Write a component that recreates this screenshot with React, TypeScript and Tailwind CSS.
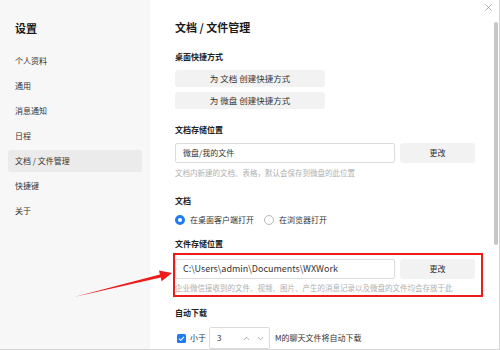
import React from "react";

const menu = ["个人资料", "通用", "消息通知", "日程", "文档 / 文件管理", "快捷键", "关于"];

function Radio({ checked }: { checked: boolean }) {
  return checked ? (
    <span className="block w-[10px] h-[10px] rounded-full border-[3px] border-[#1f7cf2] bg-white shrink-0" />
  ) : (
    <span className="block w-[10px] h-[10px] rounded-full border border-[#b8b8b8] bg-white shrink-0" />
  );
}

export default function App() {
  return (
    <div className="relative w-[500px] h-[350px] flex overflow-hidden border-b border-r border-[#d4d4d4] bg-white font-['Noto_Sans_CJK_SC',sans-serif] text-[#333]">
      {/* Sidebar */}
      <div className="w-[150px] h-full bg-[#f7f7f7] flex flex-col shrink-0">
        <div className="pt-[20px] pl-[15px] text-[11px] leading-[16px] font-bold text-[#1a1a1a]">设置</div>
        <div className="mt-[14px] flex flex-col gap-[3px]">
          {menu.map((m, i) => (
            <div
              key={m}
              className={
                i === 4
                  ? "mx-[8px] px-[7px] h-[22px] flex items-center rounded-[3px] bg-[#ebebeb] text-[8px] text-[#333]"
                  : "mx-[8px] px-[7px] h-[22px] flex items-center rounded-[3px] text-[8px] text-[#333]"
              }
            >
              {m}
            </div>
          ))}
        </div>
      </div>

      {/* Main */}
      <div className="relative flex-1 h-full pl-[25px] flex flex-col">
        {/* close */}
        <svg className="absolute top-[4px] right-[7px]" width="7" height="7" viewBox="0 0 7 7">
          <path d="M0.5 0.5 L6.5 6.5 M6.5 0.5 L0.5 6.5" stroke="#9a9a9a" strokeWidth="0.8" fill="none" />
        </svg>
        {/* scrollbar */}
        <div className="absolute right-[1px] top-[22px] w-[4px] h-[223px] rounded-full bg-[#c6c6c6]" />

        <div className="pt-[19px] text-[11px] leading-[16px] font-bold text-[#1a1a1a]">文档 / 文件管理</div>

        <div className="mt-[16px] text-[8px] leading-[12px] font-bold text-[#222]">桌面快捷方式</div>
        <div className="mt-[7px] w-[150px] h-[20px] rounded-[3px] bg-[#f2f2f2] flex items-center justify-center text-[8.5px] text-[#333]">
          为 文档 创建快捷方式
        </div>
        <div className="mt-[5px] w-[150px] h-[20px] rounded-[3px] bg-[#f2f2f2] flex items-center justify-center text-[8.5px] text-[#333]">
          为 微盘 创建快捷方式
        </div>

        <div className="mt-[15px] text-[8px] leading-[12px] font-bold text-[#222]">文档存储位置</div>
        <div className="mt-[7px] flex gap-[5px]">
          <div className="w-[220px] h-[20px] border border-[#dcdcdc] rounded-[2px] flex items-center pl-[7px] text-[8px] text-[#333]">
            微盘/我的文件
          </div>
          <div className="w-[75px] h-[20px] rounded-[3px] bg-[#f2f2f2] flex items-center justify-center text-[8px] text-[#333]">
            更改
          </div>
        </div>
        <div className="mt-[5px] text-[7.5px] leading-[10px] text-[#b0b0b0]">文档内新建的文档、表格，默认会保存到微盘的此位置</div>

        <div className="mt-[17px] text-[8px] leading-[12px] font-bold text-[#222]">文档</div>
        <div className="mt-[7px] flex items-center h-[12px]">
          <Radio checked />
          <span className="ml-[5px] text-[8px] text-[#333]">在桌面客户端打开</span>
          <span className="ml-[10px]">
            <Radio checked={false} />
          </span>
          <span className="ml-[5px] text-[8px] text-[#333]">在浏览器打开</span>
        </div>

        <div className="mt-[12px] text-[8px] leading-[12px] font-bold text-[#222]">文件存储位置</div>
        <div className="relative mt-[9px]">
          <div className="flex gap-[5px]">
            <div className="w-[220px] h-[20px] border border-[#dcdcdc] rounded-[2px] flex items-center pl-[7px] text-[9px] text-[#333]">
              C:\Users\admin\Documents\WXWork
            </div>
            <div className="w-[75px] h-[20px] rounded-[3px] bg-[#f2f2f2] flex items-center justify-center text-[8px] text-[#333]">
              更改
            </div>
          </div>
          <div className="mt-[4px] text-[7.5px] leading-[10px] text-[#b0b0b0]">
            企业微信接收到的文件、视频、图片、产生的消息记录以及微盘的文件均会存放于此
          </div>
          <div className="absolute left-[-2px] top-[-6px] w-[310px] h-[44px] border-2 border-[#ee1b1b]" />
        </div>

        <div className="mt-[14px] text-[8px] leading-[12px] font-bold text-[#222]">自动下载</div>
        <div className="mt-[8px] flex items-center">
          <span className="ml-[2px] w-[9px] h-[9px] rounded-[1.5px] bg-[#1f7cf2] flex items-center justify-center shrink-0">
            <svg width="7" height="7" viewBox="0 0 7 7">
              <path d="M1 3.6 L2.8 5.3 L6 1.8" stroke="#fff" strokeWidth="1.1" fill="none" />
            </svg>
          </span>
          <span className="ml-[4px] text-[8px] text-[#333]">小于</span>
          <div className="ml-[3px] w-[61px] h-[22px] border border-[#dcdcdc] rounded-[2px] flex items-center pl-[7px] pr-[5px] shrink-0">
            <span className="text-[8px] text-[#333] flex-1">3</span>
            <svg width="7" height="5" viewBox="0 0 7 5">
              <path d="M0.8 4 L3.5 1.2 L6.2 4" stroke="#999" strokeWidth="0.8" fill="none" />
            </svg>
            <svg className="ml-[7px]" width="7" height="5" viewBox="0 0 7 5">
              <path d="M0.8 1 L3.5 3.8 L6.2 1" stroke="#999" strokeWidth="0.8" fill="none" />
            </svg>
          </div>
          <span className="ml-[5px] text-[8px] text-[#333]">M的聊天文件将自动下载</span>
        </div>
      </div>

      {/* annotation arrow */}
      <svg className="absolute left-0 top-0 pointer-events-none" width="500" height="350" viewBox="0 0 500 350">
        <polygon points="74,297 160.7,277.6 161.6,281.3 172,273 159,270.6 159.9,274.4" fill="#ee1b1b" />
      </svg>
    </div>
  );
}
